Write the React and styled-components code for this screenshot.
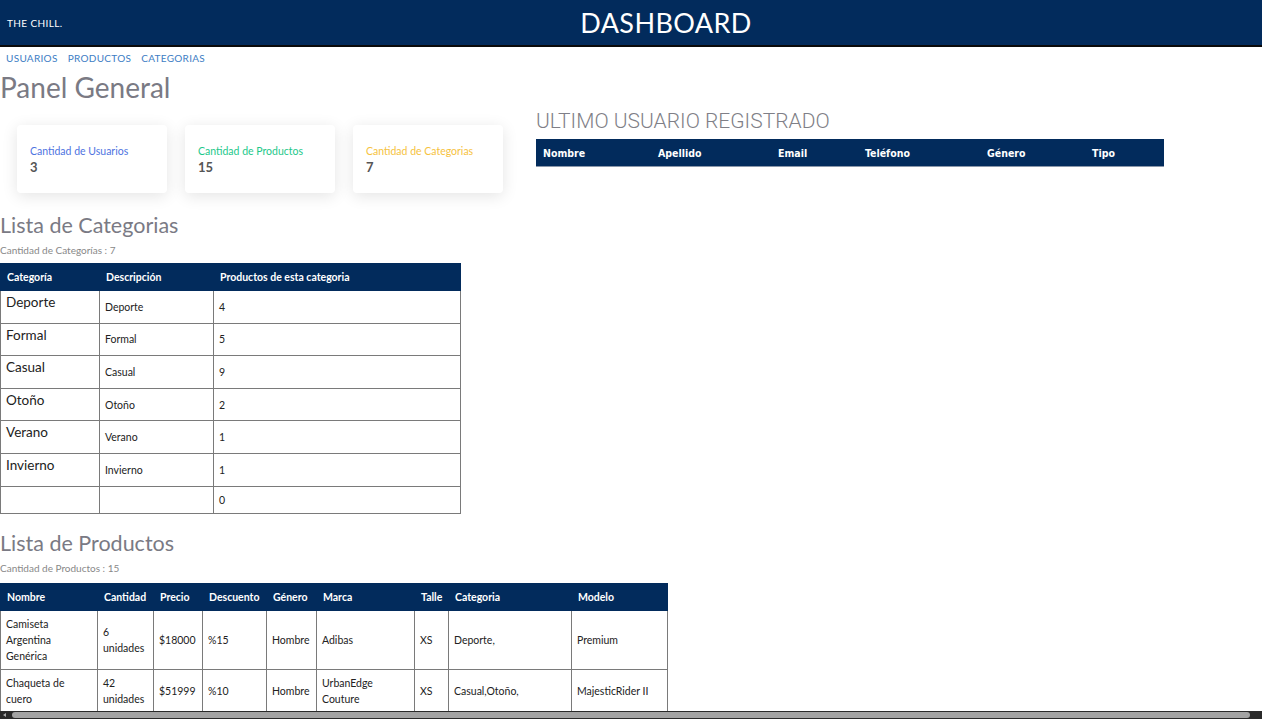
import React from 'react'
import styled, { createGlobalStyle } from 'styled-components'

const navy = '#022b5c'

const GlobalStyle = createGlobalStyle`
    html, body {
        margin: 0;
        padding: 0;
        background: #fff;
        font-family: Lato, "Noto Sans", sans-serif;
        overflow: hidden;
    }
`

const Header = styled.header`
    display: flex;
    align-items: center;
    height: 45px;
    background: ${navy};
    border-bottom: 2px solid #0a0a0a;
    color: #fff;
`

const Brand = styled.div`
    padding-left: 7px;
    width: 63px;
    font-size: 10px;
    letter-spacing: 0.4px;
`

const Title = styled.h1`
    flex: 1;
    margin: 0;
    text-align: center;
    font-size: 27px;
    font-weight: 400;
    letter-spacing: 0.4px;
`

const Nav = styled.nav`
    display: flex;
    gap: 10px;
    padding: 5px 6px 0;
    height: 15px;

    a {
        color: #3d7dc4;
        font-size: 10px;
        letter-spacing: 0.3px;
        text-decoration: none;
    }
`

const TopRow = styled.div`
    display: flex;
`

const LeftBlock = styled.div`
    width: 536px;
`

const RightBlock = styled.div`
    padding-top: 42px;
`

const PageTitle = styled.h2`
    margin: 4px 0 0;
    font-size: 28px;
    font-weight: 400;
    color: #7a7a84;
    line-height: 32px;
`

const SectionTitle = styled.h3`
    margin: 0;
    font-size: 21.5px;
    font-weight: 400;
    color: #7a7a84;
    line-height: 26px;
`

const UserTitle = styled.h3`
    margin: 0 0 6px;
    font-family: Roboto, sans-serif;
    font-size: 21px;
    font-weight: 300;
    color: #7f7f87;
    line-height: 24px;
`

const Count = styled.p`
    margin: 6px 0 ${p => p.$after || 7}px;
    font-size: 10px;
    color: #888;
`

const Cards = styled.div`
    display: flex;
    gap: 18px;
    padding: 22px 0 19px 17px;
`

const Card = styled.div`
    width: 150px;
    height: 68px;
    box-sizing: border-box;
    padding: 20px 13px;
    background: #fff;
    border-radius: 4px;
    box-shadow: 0 3px 16px rgba(0, 0, 0, 0.11);
`

const CardLabel = styled.div`
    font-size: 10.5px;
    color: ${p => p.color};
`

const CardValue = styled.div`
    margin-top: 2px;
    font-size: 13px;
    font-weight: 700;
    color: #555;
`

const Table = styled.table`
    border-collapse: collapse;
    width: ${p => p.width}px;
    table-layout: fixed;
    font-size: 10.5px;
    color: #222;

    th {
        background: ${navy};
        color: #fff;
        text-align: left;
        font-weight: 700;
        height: 26px;
        padding: 0 6px;
        border: 1px solid ${navy};
    }

    td {
        border: 1px solid #7a7a7a;
        padding: 4px 5px;
        vertical-align: middle;
    }
`

const UserTable = styled(Table)`
    th {
        font-family: "DejaVu Sans Condensed", Roboto, sans-serif;
        font-size: 10.5px;
        border-bottom: 1px solid #8a97aa;
    }
`

const CategoryRow = styled.tr`
    height: ${p => p.$short ? 27 : 32.6}px;
`

const CategoryName = styled.td`
    && {
        font-size: 13.5px;
        vertical-align: top;
        padding-top: 3px;
    }
`

const ProductTable = styled(Table)`
    td {
        line-height: 16px;
        padding: 5px 5px;
    }
`

const Scrollbar = styled.div`
    position: fixed;
    left: 0;
    right: 0;
    bottom: 0;
    height: 8px;
    padding: 1px 12px 1px 12px;
    background: #2a2a2a;
    box-sizing: border-box;

    &::before {
        content: '';
        position: absolute;
        left: 3px;
        top: 2px;
        border-style: solid;
        border-width: 2px 3px 2px 0;
        border-color: transparent #aaa transparent transparent;
    }
`

const Thumb = styled.div`
    height: 100%;
    background: #a3a3a3;
    border-radius: 3px;
`

const Section = styled.section`
    margin-top: ${p => p.$top || 0}px;
`

const categories = [
    ['Deporte', 'Deporte', 4],
    ['Formal', 'Formal', 5],
    ['Casual', 'Casual', 9],
    ['Otoño', 'Otoño', 2],
    ['Verano', 'Verano', 1],
    ['Invierno', 'Invierno', 1],
    ['', '', 0],
]

const products = [
    ['Camiseta Argentina Genérica', '6 unidades', '$18000', '%15', 'Hombre', 'Adibas', 'XS', 'Deporte,', 'Premium'],
    ['Chaqueta de cuero', '42 unidades', '$51999', '%10', 'Hombre', 'UrbanEdge Couture', 'XS', 'Casual,Otoño,', 'MajesticRider II'],
]

const productCols = [97, 56, 49, 64, 50, 98, 34, 123, 96]

export default function App() {
    return (
        <>
            <GlobalStyle />
            <Header>
                <Brand>THE CHILL.</Brand>
                <Title>DASHBOARD</Title>
            </Header>
            <Nav>
                <a href="#usuarios">USUARIOS</a>
                <a href="#productos">PRODUCTOS</a>
                <a href="#categorias">CATEGORIAS</a>
            </Nav>
            <TopRow>
                <LeftBlock>
                    <PageTitle>Panel General</PageTitle>
                    <Cards>
                        <Card>
                            <CardLabel color="#4e73df">Cantidad de Usuarios</CardLabel>
                            <CardValue>3</CardValue>
                        </Card>
                        <Card>
                            <CardLabel color="#1cc88a">Cantidad de Productos</CardLabel>
                            <CardValue>15</CardValue>
                        </Card>
                        <Card>
                            <CardLabel color="#f6c23e">Cantidad de Categorias</CardLabel>
                            <CardValue>7</CardValue>
                        </Card>
                    </Cards>
                </LeftBlock>
                <RightBlock>
                    <UserTitle>ULTIMO USUARIO REGISTRADO</UserTitle>
                    <UserTable width={627}>
                        <colgroup>
                            <col width="115" /><col width="120" /><col width="87" />
                            <col width="122" /><col width="105" /><col width="78" />
                        </colgroup>
                        <thead>
                            <tr>
                                <th>Nombre</th><th>Apellido</th><th>Email</th>
                                <th>Teléfono</th><th>Género</th><th>Tipo</th>
                            </tr>
                        </thead>
                    </UserTable>
                </RightBlock>
            </TopRow>
            <Section>
                <SectionTitle>Lista de Categorias</SectionTitle>
                <Count>Cantidad de Categorías : 7</Count>
                <Table width={460}>
                    <colgroup>
                        <col width="99" /><col width="114" /><col width="247" />
                    </colgroup>
                    <thead>
                        <tr><th>Categoría</th><th>Descripción</th><th>Productos de esta categoria</th></tr>
                    </thead>
                    <tbody>
                        {categories.map(([name, desc, total], i) => (
                            <CategoryRow key={i} $short={i === categories.length - 1}>
                                <CategoryName>{name}</CategoryName>
                                <td>{desc}</td>
                                <td>{total}</td>
                            </CategoryRow>
                        ))}
                    </tbody>
                </Table>
            </Section>
            <Section $top={16}>
                <SectionTitle>Lista de Productos</SectionTitle>
                <Count $after={9}>Cantidad de Productos : 15</Count>
                <ProductTable width={668}>
                    <colgroup>
                        {productCols.map((w, i) => <col key={i} width={w} />)}
                    </colgroup>
                    <thead>
                        <tr>
                            <th>Nombre</th><th>Cantidad</th><th>Precio</th><th>Descuento</th>
                            <th>Género</th><th>Marca</th><th>Talle</th><th>Categoria</th><th>Modelo</th>
                        </tr>
                    </thead>
                    <tbody>
                        {products.map((row, i) => (
                            <tr key={i}>
                                {row.map((cell, j) => <td key={j}>{cell}</td>)}
                            </tr>
                        ))}
                    </tbody>
                </ProductTable>
            </Section>
            <Scrollbar>
                <Thumb />
            </Scrollbar>
        </>
    )
}
